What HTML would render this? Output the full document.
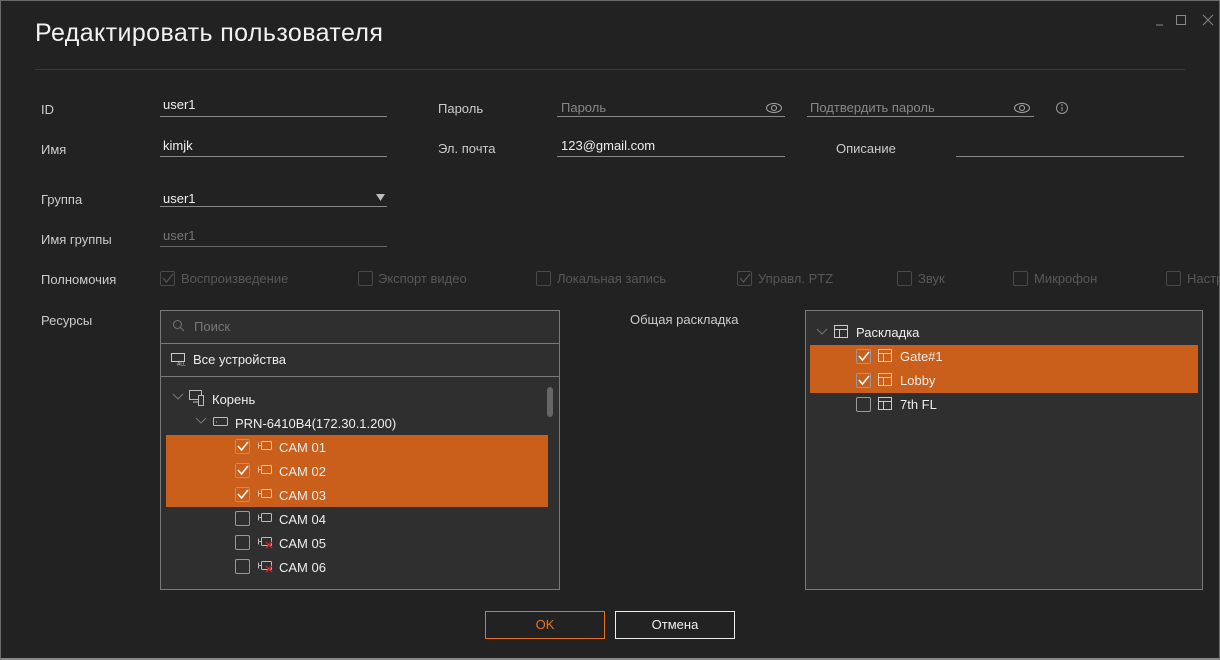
<!DOCTYPE html><html><head><meta charset="utf-8"><style>
*{margin:0;padding:0;box-sizing:border-box}
body{width:1220px;height:660px;background:#222;font-family:"Liberation Sans","DejaVu Sans",sans-serif;font-size:13px;color:#ddd;position:relative;overflow:hidden}
.a{position:absolute;white-space:nowrap}
.frame{position:absolute;left:0;top:0;width:1220px;height:660px;border:1px solid #6a6a6a;border-bottom:2px solid #888}
.lbl{color:#ccc;font-size:13px}
.ul{position:absolute;height:1px;background:#888}
.val{color:#eee}
.ph{color:#888}
.cb{position:absolute;width:15px;height:15px;border:1px solid #888;border-radius:2px}
.cbd{border-color:#4a4a4a}
.dis{color:#585858}
.panel{position:absolute;background:#2f2f2f;border:1px solid #7a7a7a}
.hl{position:absolute;background:#c95f1b}
</style></head><body>
<div class="frame"></div>
<div class="a" style="left:35px;top:19px;font-size:25px;letter-spacing:0.4px;color:#f2f2f2">Редактировать пользователя</div>
<div class="a" style="left:35px;top:69px;width:1150px;height:1px;background:#3a3a3a"></div>
<svg class="a" style="left:1150px;top:12px" width="65" height="16"><line x1="6" y1="13" x2="13" y2="13" stroke="#888"/><rect x="26.5" y="3.5" width="9" height="9" fill="none" stroke="#888"/><path d="M53 3l10 10M63 3l-10 10" stroke="#888"/></svg>

<div class="a lbl" style="left:41px;top:102px">ID</div>
<div class="a val" style="left:163px;top:97px">user1</div><div class="ul" style="left:160px;top:116px;width:227px"></div>
<div class="a lbl" style="left:438px;top:101px">Пароль</div>
<div class="a ph" style="left:561px;top:100px">Пароль</div><div class="ul" style="left:557px;top:116px;width:228px"></div>
<svg class="a" style="left:765px;top:101px" width="18" height="14"><ellipse cx="9" cy="7" rx="7.5" ry="4.5" fill="none" stroke="#aaa"/><circle cx="9" cy="7" r="2.5" fill="none" stroke="#aaa"/></svg>
<div class="a ph" style="left:810px;top:100px">Подтвердить пароль</div><div class="ul" style="left:807px;top:116px;width:227px"></div>
<svg class="a" style="left:1013px;top:101px" width="18" height="14"><ellipse cx="9" cy="7" rx="7.5" ry="4.5" fill="none" stroke="#aaa"/><circle cx="9" cy="7" r="2.5" fill="none" stroke="#aaa"/></svg>
<svg class="a" style="left:1055px;top:101px" width="14" height="14"><circle cx="7" cy="7" r="5.5" fill="none" stroke="#999"/><line x1="7" y1="6" x2="7" y2="10" stroke="#999"/><circle cx="7" cy="4" r=".8" fill="#999"/></svg>

<div class="a lbl" style="left:41px;top:142px">Имя</div>
<div class="a val" style="left:163px;top:138px">kimjk</div><div class="ul" style="left:160px;top:156px;width:227px"></div>
<div class="a lbl" style="left:438px;top:141px">Эл. почта</div>
<div class="a val" style="left:561px;top:138px">123@gmail.com</div><div class="ul" style="left:557px;top:156px;width:228px"></div>
<div class="a lbl" style="left:836px;top:141px">Описание</div><div class="ul" style="left:956px;top:156px;width:228px"></div>

<div class="a lbl" style="left:41px;top:192px">Группа</div>
<div class="a val" style="left:163px;top:191px">user1</div><div class="ul" style="left:160px;top:206px;width:227px"></div>
<svg class="a" style="left:376px;top:194px" width="10" height="8"><path d="M0 0h9l-4.5 7z" fill="#bbb"/></svg>
<div class="a lbl" style="left:41px;top:232px">Имя группы</div>
<div class="a ph" style="left:163px;top:228px;color:#777">user1</div><div class="ul" style="left:160px;top:246px;width:227px;background:#666"></div>

<div class="a lbl" style="left:41px;top:272px">Полномочия</div>
<div class="cb cbd" style="left:160px;top:271px"></div><svg class="a" style="left:162px;top:273px" width="12" height="11"><path d="M1 5l3.5 4L11 1" fill="none" stroke="#555" stroke-width="1.3"/></svg><div class="a dis" style="left:181px;top:271px">Воспроизведение</div>
<div class="cb cbd" style="left:358px;top:271px"></div><div class="a dis" style="left:378px;top:271px">Экспорт видео</div>
<div class="cb cbd" style="left:536px;top:271px"></div><div class="a dis" style="left:557px;top:271px">Локальная запись</div>
<div class="cb cbd" style="left:737px;top:271px"></div><svg class="a" style="left:739px;top:273px" width="12" height="11"><path d="M1 5l3.5 4L11 1" fill="none" stroke="#555" stroke-width="1.3"/></svg><div class="a dis" style="left:758px;top:271px">Управл. PTZ</div>
<div class="cb cbd" style="left:897px;top:271px"></div><div class="a dis" style="left:918px;top:271px">Звук</div>
<div class="cb cbd" style="left:1013px;top:271px"></div><div class="a dis" style="left:1034px;top:271px">Микрофон</div>
<div class="cb cbd" style="left:1166px;top:271px"></div><div class="a dis" style="left:1187px;top:271px">Настр</div>

<div class="a lbl" style="left:41px;top:313px">Ресурсы</div>
<div class="panel" style="left:160px;top:310px;width:400px;height:280px">
 <div style="position:absolute;left:0;top:32px;width:398px;height:1px;background:#7a7a7a"></div>
 <div style="position:absolute;left:0;top:65px;width:398px;height:1px;background:#7a7a7a"></div>
</div>
<div class="panel" style="left:805px;top:310px;width:398px;height:280px"></div>
<svg class="a" style="left:172px;top:319px" width="14" height="14"><circle cx="5.5" cy="5.5" r="4" fill="none" stroke="#777"/><line x1="8.5" y1="8.5" x2="12" y2="12" stroke="#777"/></svg>
<div class="a" style="left:194px;top:319px;color:#777">Поиск</div>
<svg class="a" style="left:171px;top:353px" width="18" height="13"><rect x=".5" y=".5" width="13" height="8" fill="none" stroke="#ccc"/><text x="6" y="12.5" font-size="5" fill="#ccc" font-family="Liberation Sans">ALL</text></svg>
<div class="a" style="left:193px;top:352px;color:#eee">Все устройства</div>
<div class="a" style="left:547px;top:387px;width:6px;height:30px;background:#666;border-radius:3px"></div>
<svg class="a" style="left:172px;top:392px" width="12" height="10"><path d="M1 2l5 5 5-5" fill="none" stroke="#777"/></svg>
<svg class="a" style="left:189px;top:390px" width="18" height="16"><rect x=".5" y=".5" width="12" height="9" fill="none" stroke="#bbb"/><rect x="9.5" y="5.5" width="5" height="10" fill="#2f2f2f" stroke="#bbb"/><line x1="4" y1="12" x2="9" y2="12" stroke="#bbb"/></svg>
<div class="a" style="left:212px;top:392px;color:#eee">Корень</div>
<svg class="a" style="left:195px;top:416px" width="12" height="10"><path d="M1 2l5 5 5-5" fill="none" stroke="#777"/></svg>
<svg class="a" style="left:213px;top:417px" width="16" height="10"><rect x=".5" y=".5" width="14" height="8" rx="1" fill="none" stroke="#bbb"/><line x1="3" y1="5" x2="4" y2="5" stroke="#bbb"/></svg>
<div class="a" style="left:235px;top:416px;color:#eee">PRN-6410B4(172.30.1.200)</div>
<div class="hl" style="left:166px;top:435px;width:382px;height:72px"></div>
<div class="hl" style="left:810px;top:345px;width:388px;height:48px"></div>

<div class="a lbl" style="left:630px;top:312px">Общая раскладка</div>
<svg class="a" style="left:816px;top:327px" width="12" height="10"><path d="M1 2l5 5 5-5" fill="none" stroke="#777"/></svg>
<svg class="a" style="left:834px;top:325px" width="16" height="14"><rect x=".5" y=".5" width="13" height="12" fill="none" stroke="#ccc"/><path d="M.5 4.5h13M5.5 4.5v8" stroke="#ccc"/></svg>
<div class="a" style="left:856px;top:325px;color:#eee">Раскладка</div>

<div id="cams"></div>
<script>
var h='';
function cb(x,y,c){h+='<div class="cb" style="left:'+x+'px;top:'+y+'px;border-color:#999"></div>';if(c)h+='<svg class="a" style="left:'+(x+2)+'px;top:'+(y+2)+'px" width="12" height="11"><path d="M1 5l3.5 4L11 1" fill="none" stroke="#fff" stroke-width="1.6"/></svg>';}
var cams=[['CAM 01',1,0],['CAM 02',1,0],['CAM 03',1,0],['CAM 04',0,0],['CAM 05',0,1],['CAM 06',0,1]];
cams.forEach(function(c,i){var y=446+i*24;cb(235,y-7,c[1]);var col=c[1]?'#f0c8a8':'#bbb';
h+='<svg class="a" style="left:257px;top:'+(y-6)+'px" width="18" height="14"><path d="M1.5 2.5v6M1.5 5.5h3" fill="none" stroke="'+col+'"/><rect x="4.5" y="1.5" width="10" height="8" rx="1" fill="none" stroke="'+col+'"/>'+(c[2]?'<path d="M9 6l6 6M15 6l-6 6" stroke="#e02020" stroke-width="1.3"/>':'')+'</svg>';
h+='<div class="a" style="left:279px;top:'+(y-6)+'px;color:#eee">'+c[0]+'</div>';});
var ls=[['Gate#1',1],['Lobby',1],['7th FL',0]];
ls.forEach(function(c,i){var y=356+i*24;cb(856,y-7,c[1]);var col=c[1]?'#f0c8a8':'#ccc';
h+='<svg class="a" style="left:878px;top:'+(y-7)+'px" width="16" height="14"><rect x=".5" y=".5" width="13" height="12" fill="none" stroke="'+col+'"/><path d="M.5 4.5h13M5.5 4.5v8" stroke="'+col+'"/></svg>';
h+='<div class="a" style="left:900px;top:'+(y-7)+'px;color:#eee">'+c[0]+'</div>';});
document.getElementById('cams').innerHTML=h;
</script>

<div class="a" style="left:485px;top:611px;width:120px;height:28px;border:1px solid #e8731f;color:#e8731f;text-align:center;line-height:26px">OK</div>
<div class="a" style="left:615px;top:611px;width:120px;height:28px;border:1px solid #eee;color:#eee;text-align:center;line-height:26px">Отмена</div>
</body></html>
